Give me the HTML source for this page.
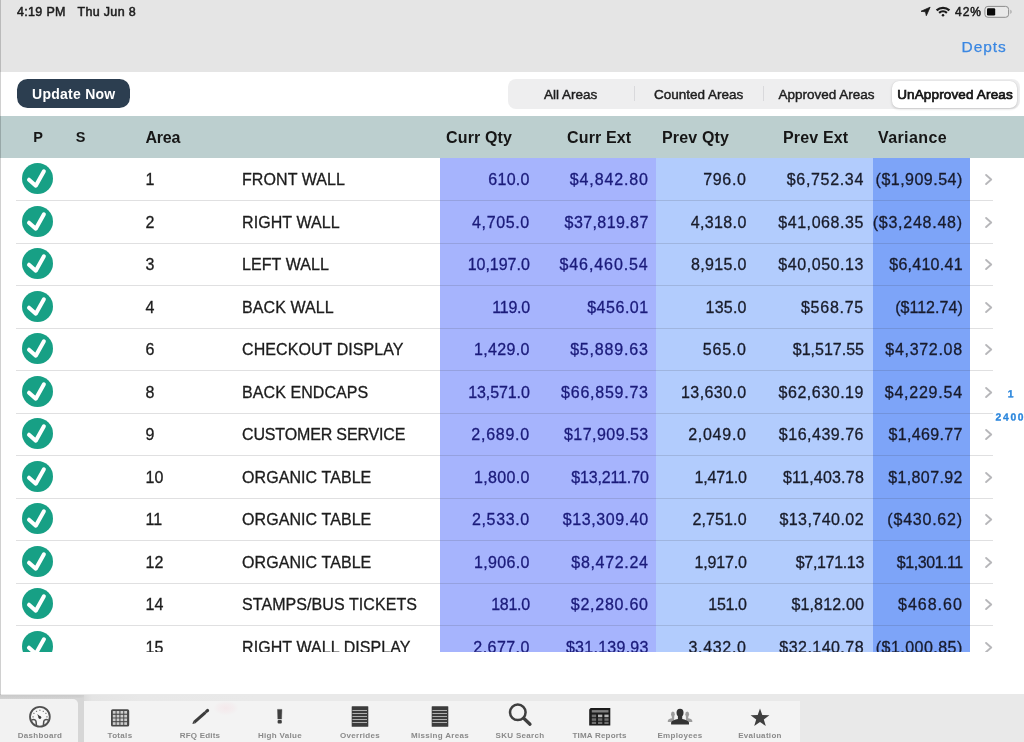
<!DOCTYPE html>
<html lang="en">
<head>
<meta charset="utf-8">
<title>Areas</title>
<style>
*{box-sizing:border-box;margin:0;padding:0}
html,body{width:1024px;height:742px;overflow:hidden;background:#fff}
body{position:relative;font-family:"Liberation Sans",sans-serif;color:#222;-webkit-font-smoothing:antialiased}
#app{position:absolute;left:0;top:0;width:1024px;height:742px;overflow:hidden;will-change:transform;opacity:.999}
.abs{position:absolute}
#topbar{left:0;top:0;width:1024px;height:71.5px;background:#e5e5e5}
#leftedge{left:0;top:0;width:1px;height:695px;background:rgba(0,0,0,.19);z-index:50}
.st{top:5px;letter-spacing:.32px;font-size:12.5px;line-height:14px;color:#1c1c1c;font-weight:400;-webkit-text-stroke:0.5px #1c1c1c;white-space:nowrap}
#depts{left:961.5px;top:37.7px;font-size:15.5px;letter-spacing:.95px;line-height:18px;color:#3a87e2;-webkit-text-stroke:0.25px #3a87e2;white-space:nowrap}
#btn{left:17.3px;top:79px;width:113px;height:29px;border-radius:10.5px;background:#2c3e50;color:#fff;font-weight:700;font-size:14px;letter-spacing:.25px;line-height:31px;text-align:center;white-space:nowrap}
#seg{left:508px;top:79px;width:512px;height:29.5px;border-radius:8px;background:#eeeeef}
.sg{position:absolute;top:0.8px;height:30px;width:128px;text-align:center;font-size:13.5px;line-height:30px;color:#1e1e1e;white-space:nowrap;-webkit-text-stroke:0.45px #1e1e1e}
.sgsel{position:absolute;left:384px;top:1.6px;width:124.6px;height:27px;border-radius:7px;background:#fff;box-shadow:0 1px 3px rgba(0,0,0,.18),0 0 1px rgba(0,0,0,.12)}
.sdv{position:absolute;top:7px;width:1px;height:15px;background:#d9d9dc}
#hdr{left:0;top:115.5px;width:1024px;height:42.5px;background:#bccfcf}
.h{position:absolute;top:1.5px;height:42.5px;line-height:42.5px;font-weight:700;font-size:16px;letter-spacing:.15px;color:#161616;white-space:nowrap}
#tbl{left:0;top:158px;width:1024px;height:494px;overflow:hidden}
.col{position:absolute;top:0;height:520px}
.row{position:absolute;left:0;width:1024px;height:42.5px}
.row .ln{position:absolute;left:16px;width:977px;top:42.3px;height:1px;background:rgba(60,60,67,.16)}
.c{position:absolute;top:1px;height:42.5px;line-height:42.5px;font-size:16px;white-space:nowrap;color:#1c1c1c;-webkit-text-stroke:.3px currentColor}
.n{left:145.5px}
.nm{left:242px;letter-spacing:.08px}
.r{text-align:right;width:120px;letter-spacing:.3px}
.cq{left:409.8px;color:#1b1b7a}
.ce{left:528.7px;color:#1b1b7a}
.pq{left:626.7px;color:#191c2a}
.pe{left:744px;color:#191c2a}
.vr{left:842.8px;color:#181b2c}
.ck{position:absolute;left:22px;top:5px;width:31px;height:31px}
.ch{position:absolute;left:984px;top:15px;width:10px;height:13px}
#botgrey{left:0;top:694.4px;width:1024px;height:48px;background:#e9e9e9}
#tab0{left:0;top:699px;width:77.5px;height:43px;background:#f2f2f2;border-top-right-radius:5px}
#tabs{left:83.5px;top:700.5px;width:716.5px;height:42px;background:#f3f3f3}
.tl{position:absolute;top:730.7px;font-size:8px;line-height:9px;font-weight:700;color:#8a8a8a;letter-spacing:.32px;white-space:nowrap;text-align:center;width:100px}
.ti{position:absolute}
</style>
</head>
<body>
<div id="app">
<div id="topbar" class="abs"></div>
<div id="leftedge" class="abs"></div>
<div class="abs st" style="left:17px">4:19 PM</div>
<div class="abs st" style="left:77.5px">Thu Jun 8</div>
<svg class="abs" style="left:919px;top:5px" width="95" height="14" viewBox="0 0 95 14">
  <path d="M11.1 2.2 L2 6.3 L6.5 6.8 L7.3 10.7 Z" fill="#1a1a1a" stroke="#1a1a1a" stroke-width="0.8" stroke-linejoin="round"/>
  <path d="M17.6 5.4 A9.4 9.4 0 0 1 30.4 5.4" fill="none" stroke="#1a1a1a" stroke-width="2.3" stroke-linecap="butt"/>
  <path d="M20.1 7.9 A5.8 5.8 0 0 1 27.9 7.9" fill="none" stroke="#1a1a1a" stroke-width="2.2" stroke-linecap="butt"/>
  <circle cx="24" cy="10.2" r="1.25" fill="#1a1a1a"/>
  <rect x="65.9" y="1.4" width="23.7" height="10.9" rx="3" fill="#e9e9e9" stroke="#8c8c8c" stroke-width="1"/>
  <rect x="68" y="3.2" width="8.2" height="7.2" rx="1.2" fill="#0a0a0a"/>
  <path d="M91.3 4.8 C93.1 5.2 93.1 8.5 91.3 8.9 Z" fill="#a9a9a9"/>
</svg>
<div class="abs st" style="left:955px;top:5.3px;font-size:12px;letter-spacing:1px;-webkit-text-stroke:0.5px #1c1c1c">42%</div>
<div id="depts" class="abs">Depts</div>

<div id="btn" class="abs">Update Now</div>

<div id="seg" class="abs">
  <div class="sgsel"></div>
  <div class="sdv" style="left:125.6px"></div>
  <div class="sdv" style="left:254.5px"></div>
  <div class="sg" style="left:-1.3px">All Areas</div>
  <div class="sg" style="left:126.6px">Counted Areas</div>
  <div class="sg" style="left:254.5px">Approved Areas</div>
  <div class="sg" style="left:383px;letter-spacing:.15px;-webkit-text-stroke:0.7px #111">UnApproved Areas</div>
</div>

<div id="hdr" class="abs">
  <div class="h" style="left:33.2px;top:.6px;font-size:14.5px">P</div>
  <div class="h" style="left:75.7px;top:.6px;font-size:14.5px">S</div>
  <div class="h" style="left:145.5px;letter-spacing:-.25px">Area</div>
  <div class="h" style="left:446px">Curr Qty</div>
  <div class="h" style="left:567px">Curr Ext</div>
  <div class="h" style="left:662px">Prev Qty</div>
  <div class="h" style="left:783px">Prev Ext</div>
  <div class="h" style="left:878px;letter-spacing:.4px">Variance</div>
</div>

<div id="tbl" class="abs">
  <div class="col" style="left:440px;width:216px;background:#a6b4fd"></div>
  <div class="col" style="left:656px;width:217px;background:#b2ccfd"></div>
  <div class="col" style="left:873px;width:97px;background:#7da4f8"></div>
  <div class="row" style="top:0.0px"><svg class="ck" viewBox="0 0 31 31"><circle cx="15.5" cy="15.5" r="15.5" fill="#17a085"/><path d="M7 16.7 L13.8 22.7 L21.9 8.3" fill="none" stroke="#fff" stroke-width="4" stroke-linecap="round" stroke-linejoin="round"/></svg><div class="c n">1</div><div class="c nm">FRONT WALL</div><div class="c r cq" style="letter-spacing:0.30px">610.0</div><div class="c r ce" style="letter-spacing:0.85px">$4,842.80</div><div class="c r pq" style="letter-spacing:0.70px">796.0</div><div class="c r pe" style="letter-spacing:0.67px">$6,752.34</div><div class="c r vr" style="letter-spacing:0.49px">($1,909.54)</div><svg class="ch" viewBox="0 0 10 13"><path d="M2.1 2 L7.2 6.5 L2.1 11" fill="none" stroke="#b7b7ba" stroke-width="1.9" stroke-linecap="round" stroke-linejoin="round"/></svg><div class="ln"></div></div>
  <div class="row" style="top:42.5px"><svg class="ck" viewBox="0 0 31 31"><circle cx="15.5" cy="15.5" r="15.5" fill="#17a085"/><path d="M7 16.7 L13.8 22.7 L21.9 8.3" fill="none" stroke="#fff" stroke-width="4" stroke-linecap="round" stroke-linejoin="round"/></svg><div class="c n">2</div><div class="c nm">RIGHT WALL</div><div class="c r cq" style="letter-spacing:0.62px">4,705.0</div><div class="c r ce" style="letter-spacing:0.40px">$37,819.87</div><div class="c r pq" style="letter-spacing:0.37px">4,318.0</div><div class="c r pe" style="letter-spacing:0.57px">$41,068.35</div><div class="c r vr" style="letter-spacing:0.75px">($3,248.48)</div><svg class="ch" viewBox="0 0 10 13"><path d="M2.1 2 L7.2 6.5 L2.1 11" fill="none" stroke="#b7b7ba" stroke-width="1.9" stroke-linecap="round" stroke-linejoin="round"/></svg><div class="ln"></div></div>
  <div class="row" style="top:85.0px"><svg class="ck" viewBox="0 0 31 31"><circle cx="15.5" cy="15.5" r="15.5" fill="#17a085"/><path d="M7 16.7 L13.8 22.7 L21.9 8.3" fill="none" stroke="#fff" stroke-width="4" stroke-linecap="round" stroke-linejoin="round"/></svg><div class="c n">3</div><div class="c nm">LEFT WALL</div><div class="c r cq" style="letter-spacing:-0.02px">10,197.0</div><div class="c r ce" style="letter-spacing:0.91px">$46,460.54</div><div class="c r pq" style="letter-spacing:0.33px">8,915.0</div><div class="c r pe" style="letter-spacing:0.56px">$40,050.13</div><div class="c r vr" style="letter-spacing:0.26px">$6,410.41</div><svg class="ch" viewBox="0 0 10 13"><path d="M2.1 2 L7.2 6.5 L2.1 11" fill="none" stroke="#b7b7ba" stroke-width="1.9" stroke-linecap="round" stroke-linejoin="round"/></svg><div class="ln"></div></div>
  <div class="row" style="top:127.5px"><svg class="ck" viewBox="0 0 31 31"><circle cx="15.5" cy="15.5" r="15.5" fill="#17a085"/><path d="M7 16.7 L13.8 22.7 L21.9 8.3" fill="none" stroke="#fff" stroke-width="4" stroke-linecap="round" stroke-linejoin="round"/></svg><div class="c n">4</div><div class="c nm">BACK WALL</div><div class="c r cq" style="letter-spacing:-0.28px">119.0</div><div class="c r ce" style="letter-spacing:0.52px">$456.01</div><div class="c r pq" style="letter-spacing:0.21px">135.0</div><div class="c r pe" style="letter-spacing:0.74px">$568.75</div><div class="c r vr" style="letter-spacing:0.04px">($112.74)</div><svg class="ch" viewBox="0 0 10 13"><path d="M2.1 2 L7.2 6.5 L2.1 11" fill="none" stroke="#b7b7ba" stroke-width="1.9" stroke-linecap="round" stroke-linejoin="round"/></svg><div class="ln"></div></div>
  <div class="row" style="top:170.0px"><svg class="ck" viewBox="0 0 31 31"><circle cx="15.5" cy="15.5" r="15.5" fill="#17a085"/><path d="M7 16.7 L13.8 22.7 L21.9 8.3" fill="none" stroke="#fff" stroke-width="4" stroke-linecap="round" stroke-linejoin="round"/></svg><div class="c n">6</div><div class="c nm">CHECKOUT DISPLAY</div><div class="c r cq" style="letter-spacing:0.33px">1,429.0</div><div class="c r ce" style="letter-spacing:0.82px">$5,889.63</div><div class="c r pq" style="letter-spacing:0.76px">565.0</div><div class="c r pe" style="letter-spacing:0.01px">$1,517.55</div><div class="c r vr" style="letter-spacing:0.70px">$4,372.08</div><svg class="ch" viewBox="0 0 10 13"><path d="M2.1 2 L7.2 6.5 L2.1 11" fill="none" stroke="#b7b7ba" stroke-width="1.9" stroke-linecap="round" stroke-linejoin="round"/></svg><div class="ln"></div></div>
  <div class="row" style="top:212.5px"><svg class="ck" viewBox="0 0 31 31"><circle cx="15.5" cy="15.5" r="15.5" fill="#17a085"/><path d="M7 16.7 L13.8 22.7 L21.9 8.3" fill="none" stroke="#fff" stroke-width="4" stroke-linecap="round" stroke-linejoin="round"/></svg><div class="c n">8</div><div class="c nm">BACK ENDCAPS</div><div class="c r cq" style="letter-spacing:-0.08px">13,571.0</div><div class="c r ce" style="letter-spacing:0.75px">$66,859.73</div><div class="c r pq" style="letter-spacing:0.42px">13,630.0</div><div class="c r pe" style="letter-spacing:0.54px">$62,630.19</div><div class="c r vr" style="letter-spacing:0.76px">$4,229.54</div><svg class="ch" viewBox="0 0 10 13"><path d="M2.1 2 L7.2 6.5 L2.1 11" fill="none" stroke="#b7b7ba" stroke-width="1.9" stroke-linecap="round" stroke-linejoin="round"/></svg><div class="ln"></div></div>
  <div class="row" style="top:255.0px"><svg class="ck" viewBox="0 0 31 31"><circle cx="15.5" cy="15.5" r="15.5" fill="#17a085"/><path d="M7 16.7 L13.8 22.7 L21.9 8.3" fill="none" stroke="#fff" stroke-width="4" stroke-linecap="round" stroke-linejoin="round"/></svg><div class="c n">9</div><div class="c nm" style="letter-spacing:-.15px">CUSTOMER SERVICE</div><div class="c r cq" style="letter-spacing:0.72px">2,689.0</div><div class="c r ce" style="letter-spacing:0.46px">$17,909.53</div><div class="c r pq" style="letter-spacing:0.73px">2,049.0</div><div class="c r pe" style="letter-spacing:0.51px">$16,439.76</div><div class="c r vr" style="letter-spacing:0.35px">$1,469.77</div><svg class="ch" viewBox="0 0 10 13"><path d="M2.1 2 L7.2 6.5 L2.1 11" fill="none" stroke="#b7b7ba" stroke-width="1.9" stroke-linecap="round" stroke-linejoin="round"/></svg><div class="ln"></div></div>
  <div class="row" style="top:297.5px"><svg class="ck" viewBox="0 0 31 31"><circle cx="15.5" cy="15.5" r="15.5" fill="#17a085"/><path d="M7 16.7 L13.8 22.7 L21.9 8.3" fill="none" stroke="#fff" stroke-width="4" stroke-linecap="round" stroke-linejoin="round"/></svg><div class="c n">10</div><div class="c nm">ORGANIC TABLE</div><div class="c r cq" style="letter-spacing:0.36px">1,800.0</div><div class="c r ce" style="letter-spacing:-0.14px">$13,211.70</div><div class="c r pq" style="letter-spacing:-0.16px">1,471.0</div><div class="c r pe" style="letter-spacing:0.21px">$11,403.78</div><div class="c r vr" style="letter-spacing:0.38px">$1,807.92</div><svg class="ch" viewBox="0 0 10 13"><path d="M2.1 2 L7.2 6.5 L2.1 11" fill="none" stroke="#b7b7ba" stroke-width="1.9" stroke-linecap="round" stroke-linejoin="round"/></svg><div class="ln"></div></div>
  <div class="row" style="top:340.0px"><svg class="ck" viewBox="0 0 31 31"><circle cx="15.5" cy="15.5" r="15.5" fill="#17a085"/><path d="M7 16.7 L13.8 22.7 L21.9 8.3" fill="none" stroke="#fff" stroke-width="4" stroke-linecap="round" stroke-linejoin="round"/></svg><div class="c n">11</div><div class="c nm">ORGANIC TABLE</div><div class="c r cq" style="letter-spacing:0.63px">2,533.0</div><div class="c r ce" style="letter-spacing:0.58px">$13,309.40</div><div class="c r pq" style="letter-spacing:0.12px">2,751.0</div><div class="c r pe" style="letter-spacing:0.45px">$13,740.02</div><div class="c r vr" style="letter-spacing:0.77px">($430.62)</div><svg class="ch" viewBox="0 0 10 13"><path d="M2.1 2 L7.2 6.5 L2.1 11" fill="none" stroke="#b7b7ba" stroke-width="1.9" stroke-linecap="round" stroke-linejoin="round"/></svg><div class="ln"></div></div>
  <div class="row" style="top:382.5px"><svg class="ck" viewBox="0 0 31 31"><circle cx="15.5" cy="15.5" r="15.5" fill="#17a085"/><path d="M7 16.7 L13.8 22.7 L21.9 8.3" fill="none" stroke="#fff" stroke-width="4" stroke-linecap="round" stroke-linejoin="round"/></svg><div class="c n">12</div><div class="c nm">ORGANIC TABLE</div><div class="c r cq" style="letter-spacing:0.36px">1,906.0</div><div class="c r ce" style="letter-spacing:0.69px">$8,472.24</div><div class="c r pq" style="letter-spacing:-0.18px">1,917.0</div><div class="c r pe" style="letter-spacing:-0.33px">$7,171.13</div><div class="c r vr" style="letter-spacing:-0.45px">$1,301.11</div><svg class="ch" viewBox="0 0 10 13"><path d="M2.1 2 L7.2 6.5 L2.1 11" fill="none" stroke="#b7b7ba" stroke-width="1.9" stroke-linecap="round" stroke-linejoin="round"/></svg><div class="ln"></div></div>
  <div class="row" style="top:425.0px"><svg class="ck" viewBox="0 0 31 31"><circle cx="15.5" cy="15.5" r="15.5" fill="#17a085"/><path d="M7 16.7 L13.8 22.7 L21.9 8.3" fill="none" stroke="#fff" stroke-width="4" stroke-linecap="round" stroke-linejoin="round"/></svg><div class="c n">14</div><div class="c nm">STAMPS/BUS TICKETS</div><div class="c r cq" style="letter-spacing:-0.28px">181.0</div><div class="c r ce" style="letter-spacing:0.75px">$2,280.60</div><div class="c r pq" style="letter-spacing:-0.34px">151.0</div><div class="c r pe" style="letter-spacing:0.16px">$1,812.00</div><div class="c r vr" style="letter-spacing:0.99px">$468.60</div><svg class="ch" viewBox="0 0 10 13"><path d="M2.1 2 L7.2 6.5 L2.1 11" fill="none" stroke="#b7b7ba" stroke-width="1.9" stroke-linecap="round" stroke-linejoin="round"/></svg><div class="ln"></div></div>
  <div class="row" style="top:467.5px"><svg class="ck" viewBox="0 0 31 31"><circle cx="15.5" cy="15.5" r="15.5" fill="#17a085"/><path d="M7 16.7 L13.8 22.7 L21.9 8.3" fill="none" stroke="#fff" stroke-width="4" stroke-linecap="round" stroke-linejoin="round"/></svg><div class="c n">15</div><div class="c nm">RIGHT WALL DISPLAY</div><div class="c r cq" style="letter-spacing:0.44px">2,677.0</div><div class="c r ce" style="letter-spacing:0.27px">$31,139.93</div><div class="c r pq" style="letter-spacing:0.70px">3,432.0</div><div class="c r pe" style="letter-spacing:0.46px">$32,140.78</div><div class="c r vr" style="letter-spacing:0.47px">($1,000.85)</div><svg class="ch" viewBox="0 0 10 13"><path d="M2.1 2 L7.2 6.5 L2.1 11" fill="none" stroke="#b7b7ba" stroke-width="1.9" stroke-linecap="round" stroke-linejoin="round"/></svg><div class="ln"></div></div>
</div>

<svg class="abs" style="left:994px;top:386px" width="30" height="38" viewBox="0 0 30 38">
  <g transform="scale(0.25) rotate(0.05)" font-family="Liberation Sans, sans-serif" font-size="41.2" font-weight="700" fill="#2b86dc" stroke="#2b86dc" stroke-width="1.3">
    <text x="55" y="45">1</text>
    <text x="6.5" y="137.5" letter-spacing="6.8">2400</text>
  </g>
</svg>

<div id="botgrey" class="abs"></div>
<div class="abs" style="left:0;top:694.5px;width:260px;height:7px;background:linear-gradient(to right,#d5d5d5 0,#d7d7d7 80px,#e4e4e4 92px,#e8e8e8 140px,#e9e9e9 260px)"></div>
<div class="abs" style="left:0;top:694.5px;width:84px;height:5px;background:linear-gradient(to bottom,rgba(0,0,0,.06),rgba(0,0,0,0))"></div>
<div class="abs" style="left:76px;top:698px;width:8px;height:44px;background:#d6d6d6"></div>
<div id="tab0" class="abs"></div>
<div id="tabs" class="abs"></div>
<!-- tab icons -->
<svg class="ti" style="left:28px;top:705px" width="24" height="24" viewBox="0 0 24 24">
  <circle cx="11.9" cy="11.75" r="9.9" fill="#f6f6f6" stroke="#505050" stroke-width="1.8"/>
  <path d="M3.3 15.1 C5.6 14.1 7.7 14.5 8 16.3 L8.5 20.7 M20.5 15.1 C18.2 14.1 16.1 14.5 15.8 16.3 L15.3 20.7" fill="none" stroke="#505050" stroke-width="1.5"/>
  <path d="M9.2 9 L13 11.9 L11 13.4 Z" fill="#3a3a3a"/>
  <circle cx="11.95" cy="12.6" r="1.35" fill="#3a3a3a"/>
  <g fill="#707070">
    <rect x="4.4" y="11.3" width="1.3" height="1.1"/><rect x="5.3" y="7.8" width="1.2" height="1.1"/><rect x="7.9" y="5.8" width="1.2" height="1.1"/><rect x="11.3" y="4.7" width="1.2" height="1.1"/><rect x="14.7" y="5.8" width="1.2" height="1.1"/><rect x="17.3" y="7.8" width="1.2" height="1.1"/><rect x="18.3" y="11.3" width="1.3" height="1.1"/>
  </g>
</svg>
<svg class="ti" style="left:111px;top:708.5px" width="19" height="18" viewBox="0 0 19 18">
  <rect x="0" y="0.3" width="18.2" height="17.3" rx="1.7" fill="#484848"/>
  <g fill="#cdcdcd" transform="translate(-0.1,-0.3)"><rect x="1.9" y="2.3" width="2.8" height="2.7"/><rect x="5.7" y="2.3" width="2.8" height="2.7"/><rect x="9.55" y="2.3" width="2.8" height="2.7"/><rect x="13.35" y="2.3" width="2.8" height="2.7"/><rect x="1.9" y="6.1" width="2.8" height="2.7"/><rect x="5.7" y="6.1" width="2.8" height="2.7"/><rect x="9.55" y="6.1" width="2.8" height="2.7"/><rect x="13.35" y="6.1" width="2.8" height="2.7"/><rect x="1.9" y="9.75" width="2.8" height="2.7"/><rect x="5.7" y="9.75" width="2.8" height="2.7"/><rect x="9.55" y="9.75" width="2.8" height="2.7"/><rect x="13.35" y="9.75" width="2.8" height="2.7"/><rect x="1.9" y="13.5" width="2.8" height="2.7"/><rect x="5.7" y="13.5" width="2.8" height="2.7"/><rect x="9.55" y="13.5" width="2.8" height="2.7"/><rect x="13.35" y="13.5" width="2.8" height="2.7"/></g>
</svg>
<svg class="ti" style="left:190px;top:706px" width="22" height="20" viewBox="0 0 22 20">
  <path d="M4.4 16.1 L15.5 6.3" stroke="#3c3c3c" stroke-width="3.1" stroke-linecap="butt"/>
  <path d="M16.5 5.45 L17.6 4.5" stroke="#3c3c3c" stroke-width="3.1" stroke-linecap="round"/>
  <path d="M2.4 17.9 L3.3 14.9 L5.5 17.3 Z" fill="#3c3c3c"/>
</svg>
<svg class="ti" style="left:276px;top:708px" width="8" height="17" viewBox="0 0 8 17">
  <path d="M1.5 1.4 L5.9 1.4 L5.6 11.1 L1.8 11.1 Z" fill="#3f3f3f" stroke="#3f3f3f" stroke-width="0.4" stroke-linejoin="round"/>
  <rect x="1.6" y="12" width="4.2" height="3.5" rx="1" fill="#3f3f3f"/>
</svg>
<svg class="ti" style="left:351px;top:706px" width="18" height="22" viewBox="0 0 18 22">
  <rect x="0.7" y="0.25" width="16.6" height="20.5" rx="0.6" fill="#3c3c3c"/>
  <g fill="#bdbdbd"><rect x="1.4" y="4.05" width="14.6" height="0.9"/><rect x="1.4" y="7.05" width="14.6" height="0.9"/><rect x="1.4" y="10.05" width="14.6" height="0.9"/><rect x="1.4" y="13.05" width="14.6" height="0.9"/><rect x="1.4" y="16.00" width="14.6" height="0.9"/></g>
</svg>
<svg class="ti" style="left:431px;top:706px" width="18" height="22" viewBox="0 0 18 22">
  <rect x="0.7" y="0.25" width="16.6" height="20.5" rx="0.6" fill="#3c3c3c"/>
  <g fill="#bdbdbd"><rect x="1.4" y="4.05" width="14.6" height="0.9"/><rect x="1.4" y="7.05" width="14.6" height="0.9"/><rect x="1.4" y="10.05" width="14.6" height="0.9"/><rect x="1.4" y="13.05" width="14.6" height="0.9"/><rect x="1.4" y="16.00" width="14.6" height="0.9"/></g>
</svg>
<svg class="ti" style="left:507px;top:702px" width="27" height="26" viewBox="0 0 27 26">
  <circle cx="10.8" cy="10.3" r="7.8" fill="none" stroke="#3f3f3f" stroke-width="2.5"/>
  <path d="M16.7 16.3 L23 22.2" stroke="#3f3f3f" stroke-width="3.3" stroke-linecap="round"/>
</svg>
<svg class="ti" style="left:589.1px;top:708px" width="22" height="18" viewBox="0 0 22 18">
  <path d="M1.6 0 L21.3 0 L21.3 17.4 L0.2 17.4 L0.2 1.6 Z" fill="#1c1c1c"/>
  <rect x="2.8" y="2.1" width="16.7" height="2.4" fill="#808080"/>
  <rect x="2.8" y="6.6" width="4.3" height="2.6" fill="#6e6e6e"/><rect x="9.0" y="6.6" width="4.3" height="2.6" fill="#b4b4b4"/><rect x="15.4" y="6.6" width="4.2" height="2.6" fill="#b4b4b4"/><rect x="2.8" y="10.3" width="4.3" height="2.5" fill="#6e6e6e"/><rect x="9.0" y="10.3" width="4.3" height="2.5" fill="#6e6e6e"/><rect x="15.4" y="10.3" width="4.2" height="2.5" fill="#6e6e6e"/><rect x="2.8" y="13.8" width="4.3" height="2.2" fill="#6e6e6e"/><rect x="9.0" y="13.8" width="4.3" height="2.2" fill="#6e6e6e"/><rect x="15.4" y="13.8" width="4.2" height="2.2" fill="#6e6e6e"/>
</svg>
<svg class="ti" style="left:667px;top:707px" width="27" height="18" viewBox="0 0 27 18">
  <g fill="#9c9c9c">
    <ellipse cx="5.9" cy="7.2" rx="1.9" ry="2.6"/><path d="M0.8 14.9 L0.8 13.7 C0.8 12.4 3.4 11.7 4.9 11.3 L4.9 9 L7.2 9 L7.2 14.9 Z"/>
    <ellipse cx="20.2" cy="7.2" rx="1.9" ry="2.6"/><path d="M25.3 14.9 L25.3 13.7 C25.3 12.4 22.7 11.7 21.2 11.3 L21.2 9 L18.9 9 L18.9 14.9 Z"/>
  </g>
  <g fill="#333">
    <ellipse cx="13.05" cy="5.7" rx="3.5" ry="4"/>
    <path d="M4.1 17.4 L4.1 15.7 C4.1 13.9 8 12.7 10.9 12 L10.9 8.5 L15.2 8.5 L15.2 12 C18.1 12.7 22 13.9 22 15.7 L22 17.4 Z"/>
  </g>
</svg>
<svg class="ti" style="left:750px;top:708px" width="20" height="19" viewBox="0 0 20 19">
  <path d="M10 0.6 L12.3 7 L19.4 7.2 L13.8 11.4 L15.8 18 L10 14.1 L4.2 18 L6.2 11.4 L0.6 7.2 L7.7 7 Z" fill="#3f3f3f"/>
</svg>
<div class="ti" style="left:214px;top:701px;width:24px;height:14px;background:radial-gradient(ellipse at center,rgba(255,120,150,.085) 0,rgba(255,120,150,.045) 45%,rgba(255,120,150,0) 75%)"></div>
<!-- tab labels -->
<div class="tl" style="left:-10px">Dashboard</div>
<div class="tl" style="left:70px">Totals</div>
<div class="tl" style="left:150px;letter-spacing:.18px">RFQ Edits</div>
<div class="tl" style="left:230px">High Value</div>
<div class="tl" style="left:310px">Overrides</div>
<div class="tl" style="left:390px">Missing Areas</div>
<div class="tl" style="left:470px">SKU Search</div>
<div class="tl" style="left:549.5px;letter-spacing:.2px">TIMA Reports</div>
<div class="tl" style="left:630px">Employees</div>
<div class="tl" style="left:710px">Evaluation</div>

</div>
</body>
</html>
